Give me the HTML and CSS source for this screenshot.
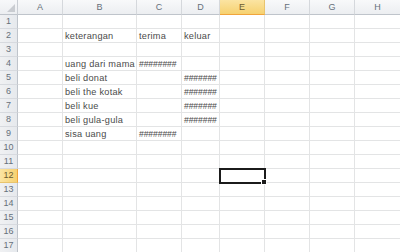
FILE: index.html
```html
<!DOCTYPE html>
<html>
<head>
    <title>Sheet1</title>
    <link rel="stylesheet" href="styles.css">
</head>
<body>
<div class="sheet">
    <div class="corner"></div>
    <div class="col-head">A</div>
    <div class="col-head">B</div>
    <div class="col-head">C</div>
    <div class="col-head">D</div>
    <div class="col-head active">E</div>
    <div class="col-head">F</div>
    <div class="col-head">G</div>
    <div class="col-head">H</div>

    <div class="row-head">1</div>
    <div class="cell"></div><div class="cell"></div><div class="cell"></div><div class="cell"></div><div class="cell"></div><div class="cell"></div><div class="cell"></div><div class="cell"></div>

    <div class="row-head">2</div>
    <div class="cell"></div><div class="cell">keterangan</div><div class="cell">terima</div><div class="cell">keluar</div><div class="cell"></div><div class="cell"></div><div class="cell"></div><div class="cell"></div>

    <div class="row-head">3</div>
    <div class="cell"></div><div class="cell"></div><div class="cell"></div><div class="cell"></div><div class="cell"></div><div class="cell"></div><div class="cell"></div><div class="cell"></div>

    <div class="row-head">4</div>
    <div class="cell"></div><div class="cell">uang dari mama</div><div class="cell num">########</div><div class="cell"></div><div class="cell"></div><div class="cell"></div><div class="cell"></div><div class="cell"></div>

    <div class="row-head">5</div>
    <div class="cell"></div><div class="cell">beli donat</div><div class="cell"></div><div class="cell num">#######</div><div class="cell"></div><div class="cell"></div><div class="cell"></div><div class="cell"></div>

    <div class="row-head">6</div>
    <div class="cell"></div><div class="cell">beli the kotak</div><div class="cell"></div><div class="cell num">#######</div><div class="cell"></div><div class="cell"></div><div class="cell"></div><div class="cell"></div>

    <div class="row-head">7</div>
    <div class="cell"></div><div class="cell">beli kue</div><div class="cell"></div><div class="cell num">#######</div><div class="cell"></div><div class="cell"></div><div class="cell"></div><div class="cell"></div>

    <div class="row-head">8</div>
    <div class="cell"></div><div class="cell">beli gula-gula</div><div class="cell"></div><div class="cell num">#######</div><div class="cell"></div><div class="cell"></div><div class="cell"></div><div class="cell"></div>

    <div class="row-head">9</div>
    <div class="cell"></div><div class="cell">sisa uang</div><div class="cell num">########</div><div class="cell"></div><div class="cell"></div><div class="cell"></div><div class="cell"></div><div class="cell"></div>

    <div class="row-head">10</div>
    <div class="cell"></div><div class="cell"></div><div class="cell"></div><div class="cell"></div><div class="cell"></div><div class="cell"></div><div class="cell"></div><div class="cell"></div>

    <div class="row-head">11</div>
    <div class="cell"></div><div class="cell"></div><div class="cell"></div><div class="cell"></div><div class="cell"></div><div class="cell"></div><div class="cell"></div><div class="cell"></div>

    <div class="row-head active">12</div>
    <div class="cell"></div><div class="cell"></div><div class="cell"></div><div class="cell"></div><div class="cell selected"></div><div class="cell"></div><div class="cell"></div><div class="cell"></div>

    <div class="row-head">13</div>
    <div class="cell"></div><div class="cell"></div><div class="cell"></div><div class="cell"></div><div class="cell"></div><div class="cell"></div><div class="cell"></div><div class="cell"></div>

    <div class="row-head">14</div>
    <div class="cell"></div><div class="cell"></div><div class="cell"></div><div class="cell"></div><div class="cell"></div><div class="cell"></div><div class="cell"></div><div class="cell"></div>

    <div class="row-head">15</div>
    <div class="cell"></div><div class="cell"></div><div class="cell"></div><div class="cell"></div><div class="cell"></div><div class="cell"></div><div class="cell"></div><div class="cell"></div>

    <div class="row-head">16</div>
    <div class="cell"></div><div class="cell"></div><div class="cell"></div><div class="cell"></div><div class="cell"></div><div class="cell"></div><div class="cell"></div><div class="cell"></div>

    <div class="row-head">17</div>
    <div class="cell"></div><div class="cell"></div><div class="cell"></div><div class="cell"></div><div class="cell"></div><div class="cell"></div><div class="cell"></div><div class="cell"></div>
</div>
</body>
</html>
```

FILE: styles.css
```css
body {
    margin: 0;
    background: #ffffff;
    font-family: "Liberation Sans", Arial, sans-serif;
    overflow: hidden;
}

.sheet {
    display: grid;
    grid-template-columns: 18px 45px 74px 45px 38px 45px 45px 45px 46px;
    grid-template-rows: 15px repeat(17, 14px);
}

.sheet > div {
    box-sizing: border-box;
    white-space: nowrap;
    overflow: hidden;
}

.corner {
    background: linear-gradient(#f7f8fa, #eceef1);
    border-right: 1px solid #c9cdd3;
    border-bottom: 1px solid #bfc4cb;
    position: relative;
}

.corner::after {
    content: "";
    position: absolute;
    right: 2px;
    bottom: 2px;
    border-left: 8px solid transparent;
    border-bottom: 8px solid #c9ccd1;
}

.col-head {
    background: linear-gradient(#f8f9fa, #eceef1);
    border-right: 1px solid #d5d8dc;
    border-bottom: 1px solid #bfc4cb;
    color: #66707b;
    font-size: 9px;
    text-align: center;
    line-height: 14px;
}

.row-head {
    background: linear-gradient(90deg, #f0f1f3, #e6e9ed);
    border-right: 1px solid #bfc4cb;
    border-bottom: 1px solid #d7dadf;
    color: #66707b;
    font-size: 9px;
    text-align: center;
    line-height: 13px;
}

.col-head.active {
    background: linear-gradient(#fbe4a2, #f6d170);
    border-bottom: 1px solid #f0a43c;
    border-right: 1px solid #e8c46e;
    color: #6a5a30;
}

.row-head.active {
    background: linear-gradient(90deg, #fbe4a2, #f6d170);
    border-right: 1px solid #f0a43c;
    border-bottom: 1px solid #e8c46e;
    color: #6a5a30;
}

.cell {
    border-right: 1px solid #e3e4e5;
    border-bottom: 1px solid #e3e4e5;
    color: #4a4a4a;
    font-size: 9.2px;
    line-height: 14px;
    padding-left: 2px;
    letter-spacing: 0.25px;
}

.cell.num {
    font-size: 8.6px;
    letter-spacing: -0.1px;
}

.cell.selected {
    overflow: visible;
    position: relative;
    outline: 2px solid #1b1b1b;
    outline-offset: -1px;
    z-index: 2;
}

.cell.selected::after {
    content: "";
    position: absolute;
    right: -3px;
    bottom: -3px;
    width: 4px;
    height: 4px;
    background: #1b1b1b;
    border: 1px solid #ffffff;
}
```
